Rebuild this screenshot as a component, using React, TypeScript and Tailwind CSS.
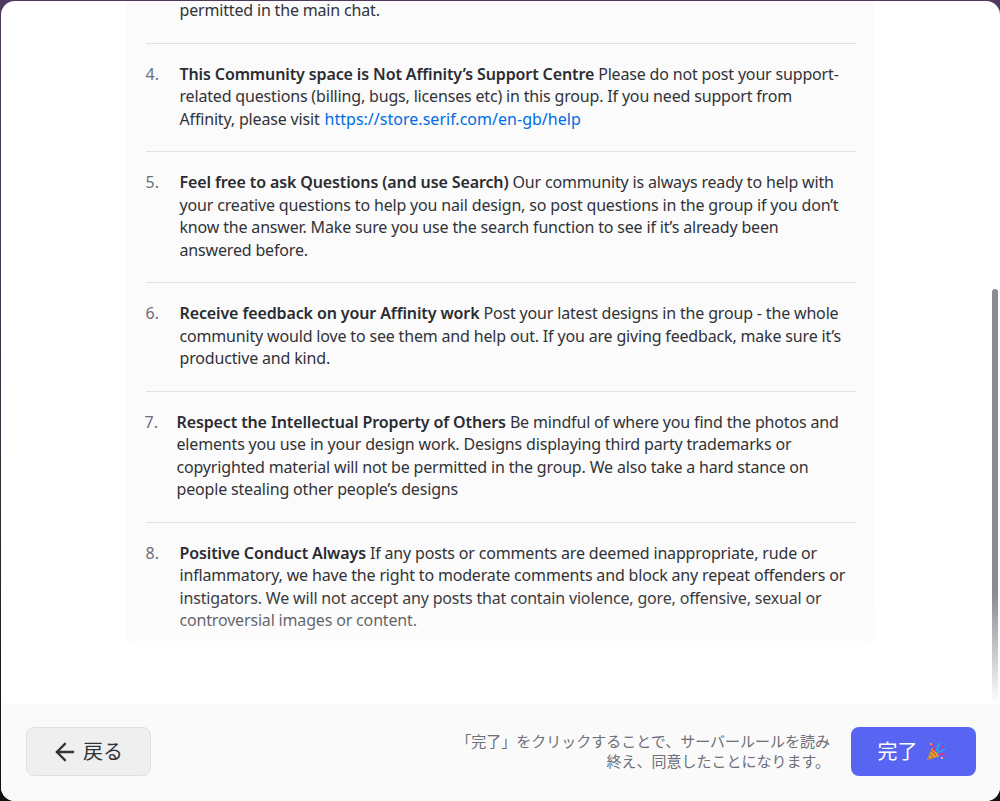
import React from "react";
import { ArrowLeft } from "lucide-react";

const SANS = "font-['Noto_Sans','Noto_Sans_CJK_JP',sans-serif]";

type Rule = {
  num: string;
  title: string;
  lines: React.ReactNode[];
  textClass?: string;
  numClass?: string;
};

const rules: Rule[] = [
  {
    num: "4.",
    title: "This Community space is Not Affinity’s Support Centre",
    lines: [
      " Please do not post your support-",
      "related questions (billing, bugs, licenses etc) in this group. If you need support from",
      <>
        Affinity, please visit <a className="ml-[1px] tracking-[0.02px] text-[#006ce7]">https://store.serif.com/en-gb/help</a>
      </>,
    ],
  },
  {
    num: "5.",
    title: "Feel free to ask Questions (and use Search)",
    lines: [
      " Our community is always ready to help with",
      "your creative questions to help you nail design, so post questions in the group if you don’t",
      "know the answer. Make sure you use the search function to see if it’s already been",
      "answered before.",
    ],
  },
  {
    num: "6.",
    title: "Receive feedback on your Affinity work",
    lines: [
      " Post your latest designs in the group - the whole",
      "community would love to see them and help out. If you are giving feedback, make sure it’s",
      "productive and kind.",
    ],
  },
  {
    num: "7.",
    title: "Respect the Intellectual Property of Others",
    textClass: "pl-[32px]",
    numClass: "-ml-px",
    lines: [
      " Be mindful of where you find the photos and",
      "elements you use in your design work. Designs displaying third party trademarks or",
      "copyrighted material will not be permitted in the group. We also take a hard stance on",
      "people stealing other people’s designs",
    ],
  },
  {
    num: "8.",
    title: "Positive Conduct Always",
    lines: [
      " If any posts or comments are deemed inappropriate, rude or",
      "inflammatory, we have the right to moderate comments and block any repeat offenders or",
      "instigators. We will not accept any posts that contain violence, gore, offensive, sexual or",
      "controversial images or content.",
    ],
  },
];

function RuleRow({ rule }: { rule: Rule }) {
  return (
    <div className="flex border-t border-[#e2e2e4] pb-[21px] pt-[19px]">
      <span className={`w-0 shrink-0 whitespace-nowrap text-[#6d6f78] ${rule.numClass ?? ""}`}>{rule.num}</span>
      <div className={`whitespace-pre tracking-[-0.17px] text-[#313338] ${rule.textClass ?? "pl-[34px]"}`}>
        {rule.lines.map((line, i) => (
          <div key={i}>
            {i === 0 && <b className="font-semibold tracking-[-0.12px] text-[#2a2c31]">{rule.title}</b>}
            {line}
          </div>
        ))}
      </div>
    </div>
  );
}

function Popper() {
  return (
    <svg width="20" height="20" viewBox="0 0 20 20" className="ml-2">
      <path d="M1 18 L6 6 L14 14 Z" fill="#e8a02c" />
      <path d="M2 15.5 L4 17.5 M3.5 12 L7.5 16 M5 8.5 L10.5 14" stroke="#b3702a" strokeWidth="1.2" />
      <path d="M8 9 Q8 4 6 2" stroke="#ea2f86" strokeWidth="1.6" fill="none" />
      <path d="M11 9 L13 1" stroke="#2aa5e8" strokeWidth="2" />
      <path d="M11 11 L19 7" stroke="#2aa5e8" strokeWidth="1.6" />
      <path d="M12 13 Q16 11 19 13" stroke="#ea2f86" strokeWidth="1.4" fill="none" />
      <rect x="4" y="1" width="2" height="2" fill="#e8a02c" />
      <rect x="15" y="4" width="2" height="2" fill="#ea2f86" />
      <rect x="15" y="15" width="2" height="2" fill="#f0a0c0" />
    </svg>
  );
}

export default function App() {
  return (
    <div className={`h-[801px] w-full overflow-hidden bg-[linear-gradient(#4f3a5e,#3a3344_50%,#111114)] pl-px pt-px ${SANS}`}>
      <div className="flex h-[800px] w-full flex-col overflow-hidden rounded-[14px] bg-white">
        <div className="relative flex min-h-0 flex-1 justify-center pr-[1px]">
          <div className="h-[646px] w-[749px] overflow-hidden rounded-b-[12px] bg-[#fbfbfb] pl-5 pr-[19px] text-[16px] leading-[22.5px]">
            <div className="whitespace-pre pb-[23px] pl-[34px] leading-[18.5px] tracking-[-0.17px] text-[#313338]">permitted in the main chat.</div>
            {rules.map((rule) => (
              <RuleRow key={rule.num} rule={rule} />
            ))}
          </div>
          {/* scrollbar */}
          <div className="absolute right-[2px] top-[288px] h-[412px] w-[6px] rounded-t-[3px] bg-[#8b8c93]" />
          {/* bottom fade over the scrolling content */}
          <div className="absolute bottom-0 left-0 right-0 h-[110px] bg-[linear-gradient(rgba(255,255,255,0),#ffffff)]" />
        </div>
        <div className="flex h-[97px] shrink-0 items-center justify-between bg-[#fafafa] px-6 pb-[2px] pl-[25px]">
          <button
            type="button"
            className="flex h-[49px] w-[125px] items-center justify-center gap-[4px] rounded-lg border border-[#e0e0e2] bg-[#efefef] pr-[3px] text-[20px] text-[#313338]"
          >
            <ArrowLeft size={28} strokeWidth={2} />
            戻る
          </button>
          <div className="flex items-center gap-[21px]">
            <p className="text-right text-[15px] leading-[19.5px] text-[#6d6f78]">
              「完了」をクリックすることで、サーバールールを読み
              <br />
              終え、同意したことになります。
            </p>
            <button
              type="button"
              className="flex h-[49px] w-[125px] items-center justify-center rounded-lg bg-[#5865f2] pr-[4px] text-[20px] text-white"
            >
              完了
              <Popper />
            </button>
          </div>
        </div>
      </div>
    </div>
  );
}
